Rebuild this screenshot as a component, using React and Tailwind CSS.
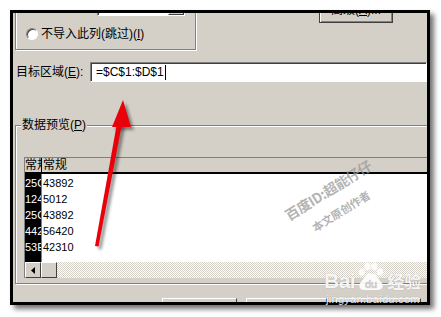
import React from 'react';

const ui = "font-['Liberation_Sans','Noto_Sans_CJK_SC',sans-serif]";

const Radio = () => (
  <span className="inline-block w-[12px] h-[12px] rounded-full bg-white border border-t-[#808080] border-l-[#808080] border-r-white border-b-white shadow-[inset_1px_1px_0_#404040]" />
);

const rows = [
  ['25C', '43892'],
  ['124', '5012'],
  ['25C', '43892'],
  ['442', '56420'],
  ['53E', '42310'],
];

export default function App() {
  return (
    <div className={`relative w-[441px] h-[317px] bg-white overflow-hidden pt-[10px] pl-[10px] text-[12px] text-black ${ui}`}>
      {/* cropped dialog */}
      <div className="w-[420px] h-[295px] border-[3px] border-black bg-[#d4d0c8] overflow-hidden shadow-[4px_4px_5px_rgba(0,0,0,0.55)] flex flex-col">
        {/* column data format group (cut at top) */}
        <div className="flex items-start h-[37px] shrink-0">
          <div className="-mt-[3px] ml-[2px] w-[181px] h-[40px] border border-t-0 border-[#808080] shadow-[inset_1px_0_0_#fff,1px_1px_0_#fff] flex flex-col">
            <div className="-mt-[14px] h-[20px] flex items-center">
              <span className="ml-[10px] flex"><Radio /></span>
              <span className="ml-[3px] leading-[12px]">日期(<u>D</u>):</span>
              <div className="ml-auto mr-[10px] w-[88px] h-[20px] bg-white border border-t-[#808080] border-l-[#808080] border-r-white border-b-white shadow-[inset_1px_1px_0_#404040] flex justify-end">
                <div className="w-[16px] h-full bg-[#d4d0c8] border border-t-white border-l-white border-r-[#404040] border-b-[#404040]" />
              </div>
            </div>
            <div className="mt-[10px] h-[16px] flex items-center">
              <span className="ml-[10px] flex"><Radio /></span>
              <span className="ml-[3px] leading-[14px]">不导入此列(跳过)(<u>I</u>)</span>
            </div>
          </div>
          <div className="ml-auto mr-[34px] -mt-[13px] w-[74px] h-[23px] shrink-0 border border-[#404040] shadow-[inset_1px_1px_0_#fff,inset_-1px_-1px_0_#808080] flex justify-center pt-[3px] leading-[12px]">
            高级(<u>A</u>)...
          </div>
        </div>

        {/* destination */}
        <div className="mt-[12px] h-[20px] flex items-center shrink-0">
          <span className="ml-[3px] w-[74px] leading-[14px]">目标区域(<u>E</u>):</span>
          <div className="flex-1 h-[20px] bg-white border border-t-[#808080] border-l-[#808080] border-r-white border-b-white shadow-[inset_1px_1px_0_#404040] flex items-center pl-[5px]">
            <span className="leading-[14px]">=$C$1:$D$1</span>
            <span className="ml-[1px] w-[1px] h-[15px] bg-black" />
          </div>
        </div>

        {/* data preview */}
        <div className="relative mt-[43px] ml-[2px] -mr-[4px] h-[159px] shrink-0 border border-[#808080] shadow-[inset_1px_1px_0_#fff,1px_1px_0_#fff]">
          <span className="absolute left-[5px] -top-[8px] px-[1px] bg-[#d4d0c8] leading-[14px]">数据预览(<u>P</u>)</span>
          <div className="mt-[31px] ml-[8px] border-t border-l border-[#808080] flex flex-col">
            <div className="h-[16px] flex bg-[#d4d0c8] border-b-2 border-black leading-[14px]">
              <div className="w-[16px] overflow-hidden whitespace-nowrap">常规</div>
              <div className="w-[1px] bg-black" />
              <div className="flex-1 pl-[1px]">常规</div>
            </div>
            <div className="h-[88px] flex bg-white font-['Liberation_Sans',sans-serif] text-[11px]">
              <div className="w-[16px] bg-black text-white pt-[1px] overflow-hidden whitespace-nowrap">
                {rows.map((r, i) => (
                  <div key={i} className="h-[16px] leading-[16px]">{r[0]}</div>
                ))}
              </div>
              <div className="w-[1px] bg-[#808080]" />
              <div className="flex-1 pt-[1px] pl-[1px]">
                {rows.map((r, i) => (
                  <div key={i} className="h-[16px] leading-[16px]">{r[1]}</div>
                ))}
              </div>
            </div>
            <div className="h-[16px] flex">
              <div className="w-[16px] h-full bg-[#d4d0c8] border border-t-white border-l-white border-r-[#404040] border-b-[#404040] flex items-center justify-center">
                <svg width="4" height="7" viewBox="0 0 4 7"><path d="M4 0 L0 3.5 L4 7 Z" fill="#000" /></svg>
              </div>
              <div className="w-[16px] h-full bg-[#d4d0c8] border border-t-white border-l-white border-r-[#404040] border-b-[#404040]" />
              <div className="flex-1 bg-[image:repeating-conic-gradient(#d4d0c8_0_25%,#ffffff_0_50%)] bg-[length:2px_2px]" />
            </div>
          </div>
        </div>

        {/* bottom buttons (cut) */}
        <div className="mt-[14px] ml-[149px] flex gap-[9px] shrink-0">
          <div className="w-[75px] h-[23px] border border-t-white border-l-white border-r-[#404040] border-b-[#404040]" />
          <div className="w-[81px] h-[23px] border border-t-white border-l-white border-r-[#404040] border-b-[#404040]" />
          <div className="w-[85px] h-[23px] border border-t-white border-l-white border-r-[#404040] border-b-[#404040]" />
        </div>
      </div>

      {/* red arrow overlay */}
      <svg className="absolute left-0 top-0 pointer-events-none" width="441" height="317" viewBox="0 0 441 317">
        <defs>
          <filter id="blur" x="-50%" y="-50%" width="200%" height="200%">
            <feGaussianBlur stdDeviation="1.6" />
          </filter>
        </defs>
        <g transform="translate(3 3)" fill="rgba(0,0,0,0.4)" filter="url(#blur)">
          <polygon points="95,246 98.5,246.5 122,124 117,123" />
          <polygon points="123,100 112,127 131,127" />
        </g>
        <g fill="#e8000a">
          <polygon points="95,246 98.5,246.5 122,124 117,123" />
          <polygon points="123,100 112,127 131,127" />
        </g>
      </svg>

      {/* watermark */}
      <span className="absolute left-[328px] top-[190px] -translate-x-1/2 -translate-y-1/2 rotate-[-32deg] whitespace-nowrap font-bold text-[14px] leading-[14px] tracking-[-0.5px] text-[#9a9a9a]/75 font-['Noto_Sans_CJK_SC',sans-serif]">
        百度ID:超能仔仔
      </span>
      <span className="absolute left-[341px] top-[211px] -translate-x-1/2 -translate-y-1/2 rotate-[-32deg] whitespace-nowrap font-bold text-[11px] leading-[11px] text-[#9a9a9a]/75 font-['Noto_Sans_CJK_SC',sans-serif]">
        本文原创作者
      </span>

      {/* baidu jingyan logo */}
      <div className="absolute left-[324px] top-[262px] flex flex-col items-start text-white/90 [text-shadow:0_0_1px_rgba(0,0,0,0.3)]">
        <div className="flex items-end h-[30px]">
          <span className="font-['Liberation_Sans',sans-serif] font-bold text-[21px] leading-[22px] tracking-[-0.5px]">Bai</span>
          <svg width="30" height="30" viewBox="0 0 30 30" className="ml-[1px] opacity-90">
            <ellipse cx="6" cy="10" rx="3" ry="3.6" fill="#fff" />
            <ellipse cx="11.5" cy="4.5" rx="3.2" ry="3.8" fill="#fff" />
            <ellipse cx="18.5" cy="4.5" rx="3.2" ry="3.8" fill="#fff" />
            <ellipse cx="24" cy="10" rx="3" ry="3.6" fill="#fff" />
            <path d="M15 11 C10 11 8 17 5 20 C2 23 3 28 8 28 L22 28 C27 28 28 23 25 20 C22 17 20 11 15 11 Z" fill="#fff" />
            <text x="15" y="26" textAnchor="middle" fontFamily="Liberation Sans" fontWeight="bold" fontSize="10" fill="#d0d0d0">du</text>
          </svg>
          <span className="ml-[1px] font-['Noto_Sans_CJK_SC',sans-serif] font-bold text-[17px] leading-[22px]">经验</span>
        </div>
        <span className="mt-[2px] ml-[2px] font-['Liberation_Sans',sans-serif] text-[11px] leading-[11px] tracking-[0.3px]">jingyan.baidu.com</span>
      </div>
    </div>
  );
}
